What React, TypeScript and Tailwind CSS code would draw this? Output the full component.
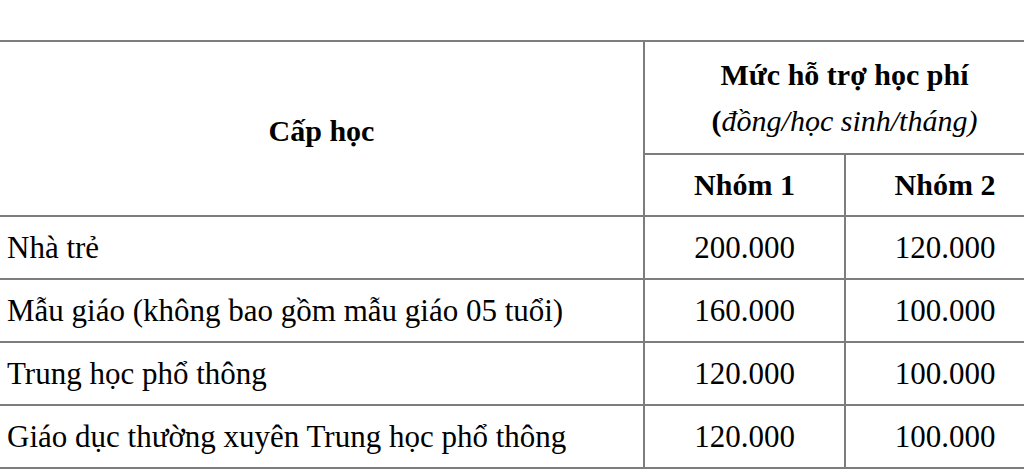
export default function App() {
  const rows = [
    { name: "Nhà trẻ", g1: "200.000", g2: "120.000" },
    { name: "Mẫu giáo (không bao gồm mẫu giáo 05 tuổi)", g1: "160.000", g2: "100.000" },
    { name: "Trung học phổ thông", g1: "120.000", g2: "100.000" },
    { name: "Giáo dục thường xuyên Trung học phổ thông", g1: "120.000", g2: "100.000" },
  ];

  return (
    <div
      className="w-[1024px] h-[473px] overflow-hidden bg-white text-black"
      style={{ fontFamily: '"Liberation Serif", "Times New Roman", serif' }}
    >
      <div className="pt-[40px]">
        <table className="border-collapse table-fixed w-[1046px] -ml-[2px] text-[31px] leading-none">
          <colgroup>
            <col className="w-[645px]" />
            <col className="w-[201px]" />
            <col className="w-[200px]" />
          </colgroup>
          <thead>
            <tr className="h-[113px]">
              <th
                rowSpan={2}
                className="border-2 border-[#7d7d7d] font-bold text-center align-middle pt-[4px] text-[30px]"
              >
                Cấp học
              </th>
              <th colSpan={2} className="border-2 border-[#7d7d7d] text-center align-middle text-[30px]">
                <div className="font-bold">Mức hỗ trợ học phí</div>
                <div className="mt-[16px] font-normal">
                  <span className="font-bold">(</span>
                  <span className="italic">đồng/học sinh/tháng)</span>
                </div>
              </th>
            </tr>
            <tr className="h-[62px]">
              <th className="border-2 border-[#7d7d7d] font-bold text-center text-[30px]">Nhóm 1</th>
              <th className="border-2 border-[#7d7d7d] font-bold text-center text-[30px]">Nhóm 2</th>
            </tr>
          </thead>
          <tbody>
            {rows.map((r) => (
              <tr key={r.name} className="h-[63px]">
                <td className="border-2 border-[#7d7d7d] pl-[7px] text-left">{r.name}</td>
                <td className="border-2 border-[#7d7d7d] text-center">{r.g1}</td>
                <td className="border-2 border-[#7d7d7d] text-center">{r.g2}</td>
              </tr>
            ))}
          </tbody>
        </table>
      </div>
    </div>
  );
}
